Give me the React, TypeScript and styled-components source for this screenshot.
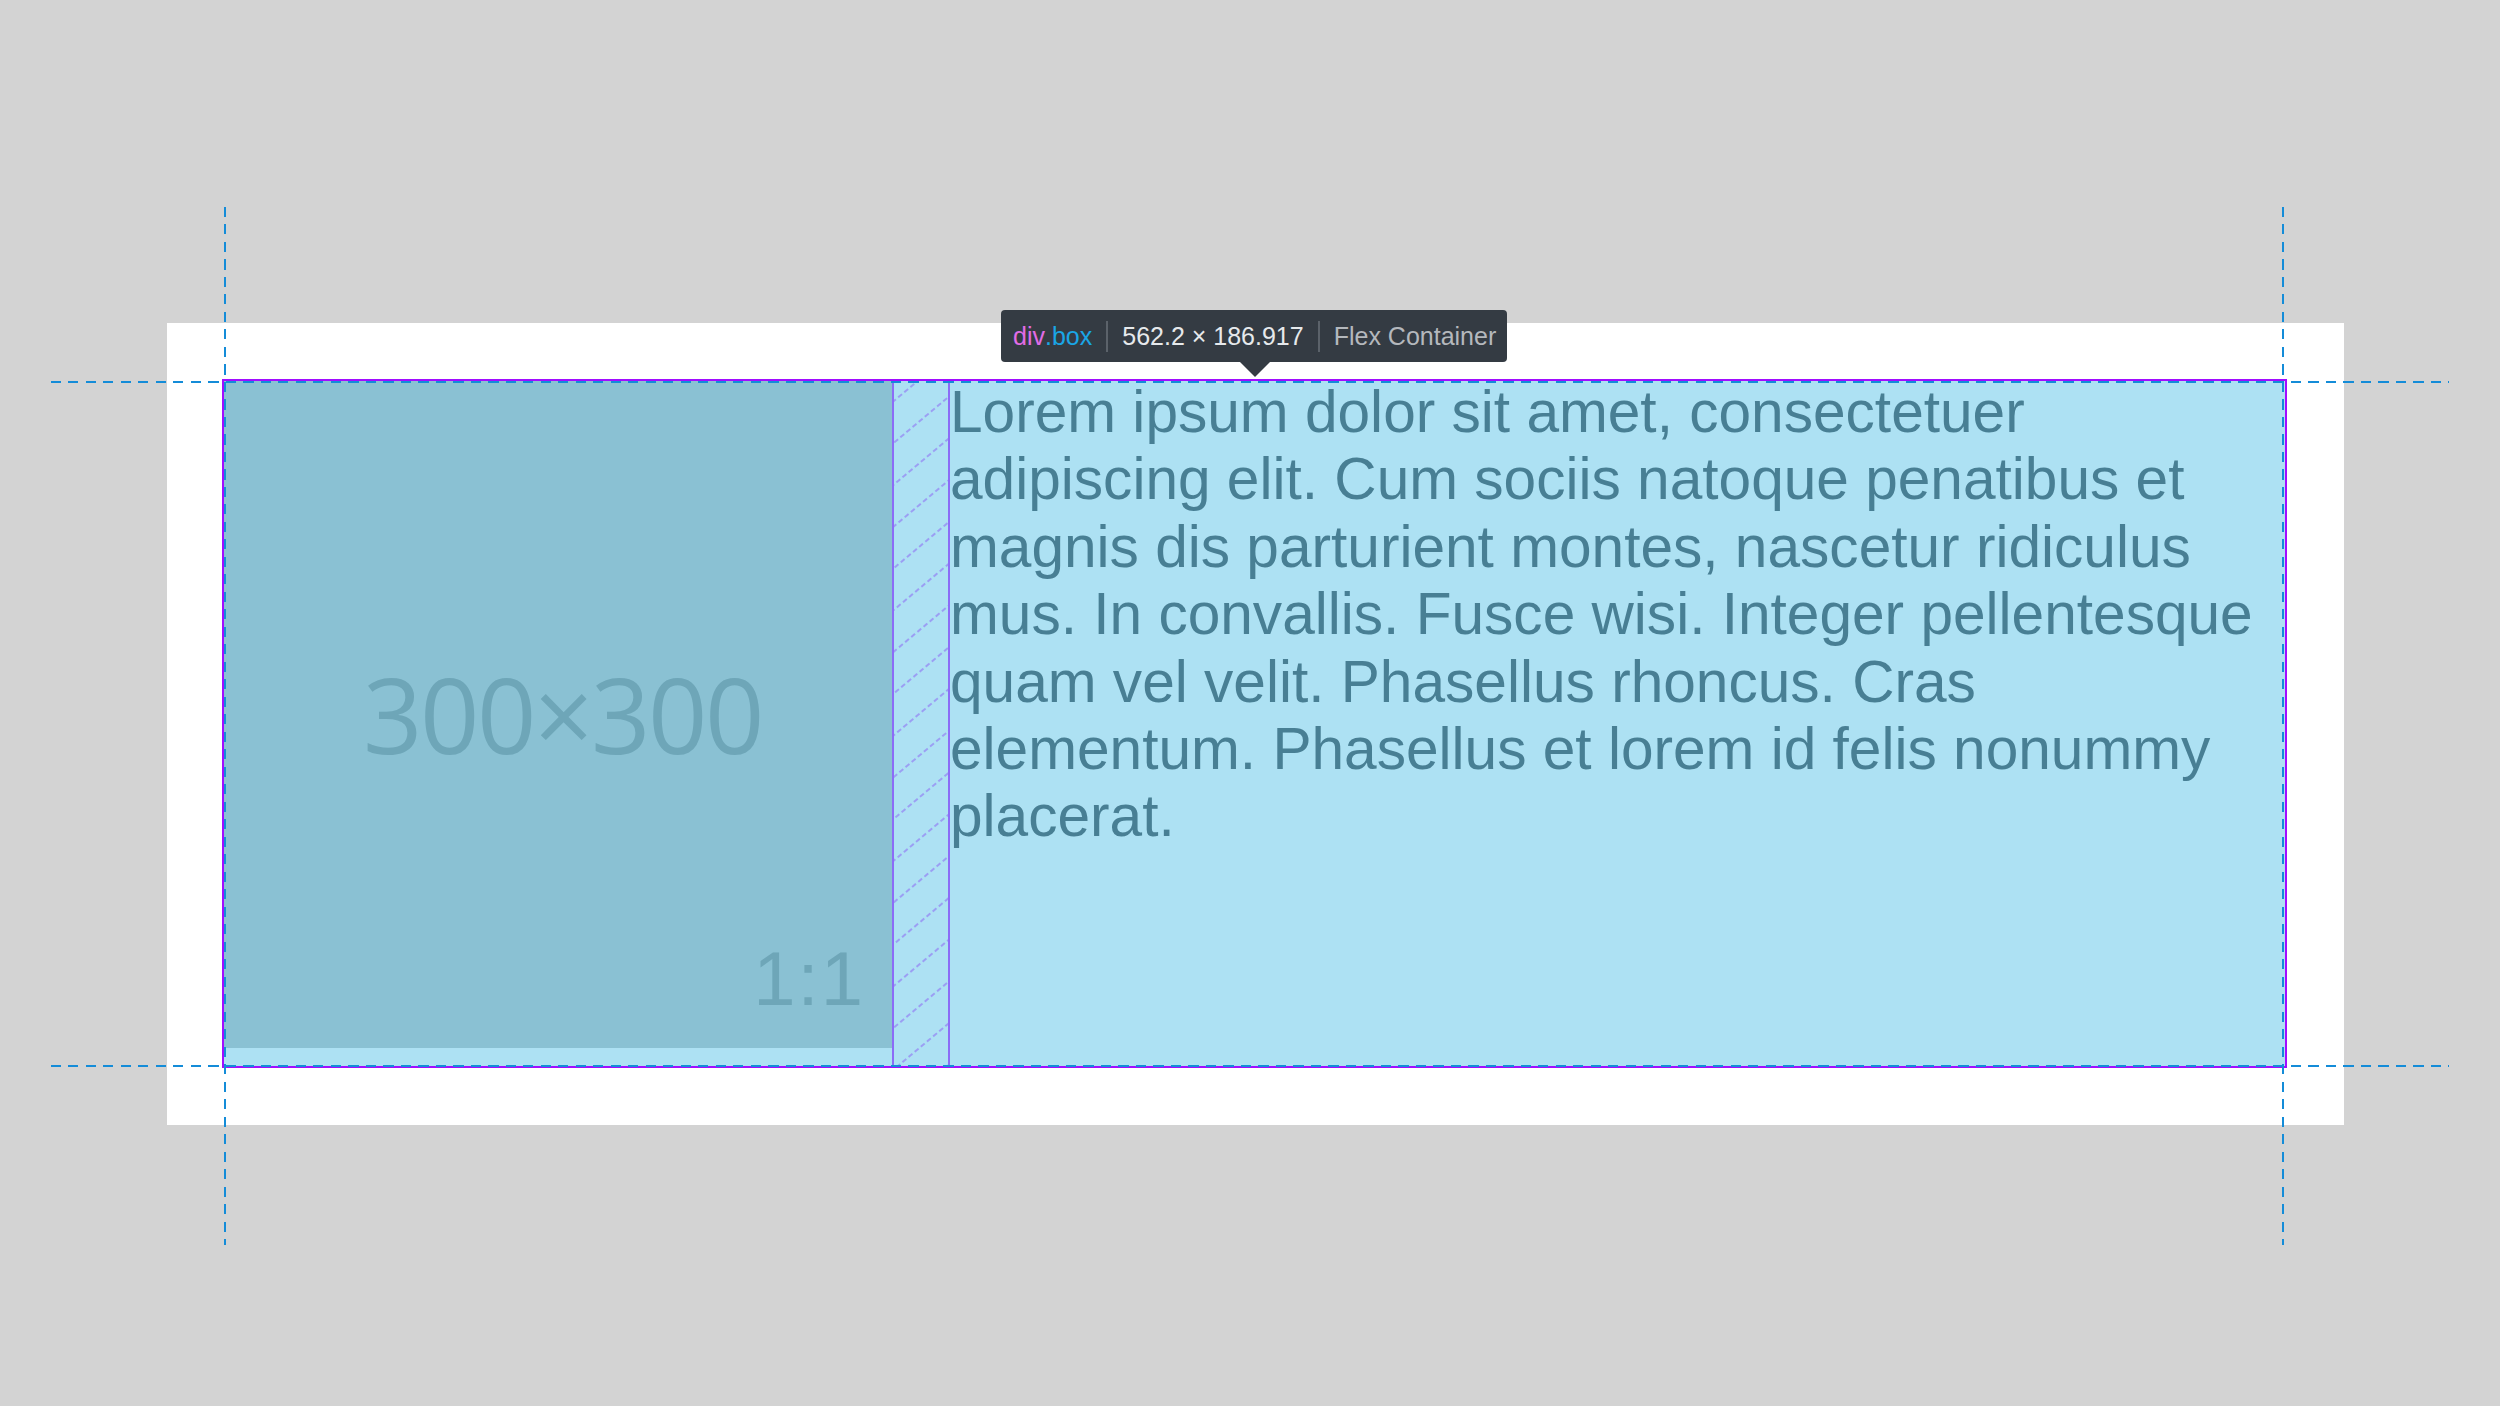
import React from 'react';
import styled, { createGlobalStyle } from 'styled-components';

const GlobalStyle = createGlobalStyle`
  html, body {
    margin: 0;
    padding: 0;
  }
  body {
    background: #d3d3d3;
    font-family: 'Liberation Sans', Arial, sans-serif;
  }
`;

const Page = styled.div`
  position: relative;
  width: 2500px;
  height: 1406px;
  overflow: hidden;
  box-sizing: border-box;
  padding: 323px 0 0 167px;
`;

const Panel = styled.div`
  width: 2177px;
  box-sizing: border-box;
  padding: 57px 58px 58px 56px;
  background: #ffffff;
`;

const Box = styled.div`
  position: relative;
  display: flex;
  align-items: flex-start;
  height: 687px;
  background: #ade1f3;
`;

const Placeholder = styled.div`
  position: relative;
  flex-shrink: 0;
  display: flex;
  align-items: center;
  justify-content: center;
  width: 669px;
  height: 668px;
  background: #8ac1d3;
  color: #6ea6b8;
`;

const PlaceholderSize = styled.span`
  font-family: 'Open Sans', sans-serif;
  font-size: 104px;
  line-height: 1;
  letter-spacing: -2.5px;
  padding-left: 10px;
`;

const RatioLabel = styled.span`
  position: absolute;
  right: 27px;
  bottom: 31px;
  font-family: 'Liberation Sans', Arial, sans-serif;
  font-size: 76px;
  line-height: 1;
  letter-spacing: 2px;
`;

const GapColumn = styled.div`
  flex-shrink: 0;
  align-self: stretch;
  width: 58px;
  box-sizing: border-box;
  border-left: 2px solid #8b6cf7;
  border-right: 2px solid #8b6cf7;

  svg {
    display: block;
  }
`;

const Copy = styled.p`
  flex: 1;
  margin: -2px 0 0;
  font-family: 'Liberation Sans', Arial, sans-serif;
  font-size: 58.6px;
  line-height: 67.4px;
  color: #487f94;
`;

const Outline = styled.div`
  position: absolute;
  inset: -1px;
  border: 2px solid #a10dff;
  pointer-events: none;
`;

// dashed blue ruler lines drawn by the inspector
const GuideH = styled.div<{ $top: number }>`
  position: absolute;
  left: 51px;
  top: ${({ $top }) => $top}px;
  width: 2398px;
  height: 2px;
  background: repeating-linear-gradient(
    to right,
    #148cd8 0 10px,
    transparent 10px 17.5px
  );
  pointer-events: none;
`;

const GuideV = styled.div<{ $left: number }>`
  position: absolute;
  top: 207px;
  left: ${({ $left }) => $left}px;
  width: 2px;
  height: 1038px;
  background: repeating-linear-gradient(
    to bottom,
    #148cd8 0 10px,
    transparent 10px 17.5px
  );
  pointer-events: none;
`;

const Tooltip = styled.div`
  position: absolute;
  left: 1001px;
  top: 310px;
  height: 52px;
  display: flex;
  align-items: center;
  box-sizing: border-box;
  padding: 0 11px 0 12px;
  background: #343b43;
  border-radius: 4px;
  font-family: 'Liberation Sans', Arial, sans-serif;
  font-size: 25px;
  white-space: nowrap;

  &::after {
    content: '';
    position: absolute;
    top: 100%;
    left: 239px;
    border-left: 15px solid transparent;
    border-right: 15px solid transparent;
    border-top: 15px solid #343b43;
  }
`;

const TagName = styled.span`
  color: #e16ce6;
`;

const ClassName = styled.span`
  color: #1aa6e6;
`;

const Dimensions = styled.span`
  color: #e6e9ec;
`;

const Kind = styled.span`
  color: #b4b8bd;
`;

const Divider = styled.span`
  width: 2px;
  height: 31px;
  margin: 0 14px;
  background: #5b626a;
`;

const Hatch = () => (
  <svg width="100%" height="100%">
    <defs>
      <pattern
        id="gapHatch"
        width="16"
        height="32"
        patternUnits="userSpaceOnUse"
        patternTransform="rotate(-40)"
      >
        <line
          x1="0"
          y1="16"
          x2="16"
          y2="16"
          stroke="#8f72f2"
          strokeOpacity="0.8"
          strokeWidth="1.3"
          strokeDasharray="5 3"
        />
      </pattern>
    </defs>
    <rect width="100%" height="100%" fill="url(#gapHatch)" />
  </svg>
);

export default function App() {
  return (
    <>
      <GlobalStyle />
      <Page>
        <Panel>
          <Box>
            <Placeholder>
              <PlaceholderSize>300×300</PlaceholderSize>
              <RatioLabel>1:1</RatioLabel>
            </Placeholder>
            <GapColumn>
              <Hatch />
            </GapColumn>
            <Copy>
              Lorem ipsum dolor sit amet, consectetuer adipiscing elit. Cum sociis natoque
              penatibus et magnis dis parturient montes, nascetur ridiculus mus. In convallis.
              Fusce wisi. Integer pellentesque quam vel velit. Phasellus rhoncus. Cras
              elementum. Phasellus et lorem id felis nonummy placerat.
            </Copy>
            <Outline />
          </Box>
        </Panel>

        <GuideH $top={381} />
        <GuideH $top={1065} />
        <GuideV $left={224} />
        <GuideV $left={2282} />

        <Tooltip>
          <TagName>div</TagName>
          <ClassName>.box</ClassName>
          <Divider />
          <Dimensions>562.2 × 186.917</Dimensions>
          <Divider />
          <Kind>Flex Container</Kind>
        </Tooltip>
      </Page>
    </>
  );
}
